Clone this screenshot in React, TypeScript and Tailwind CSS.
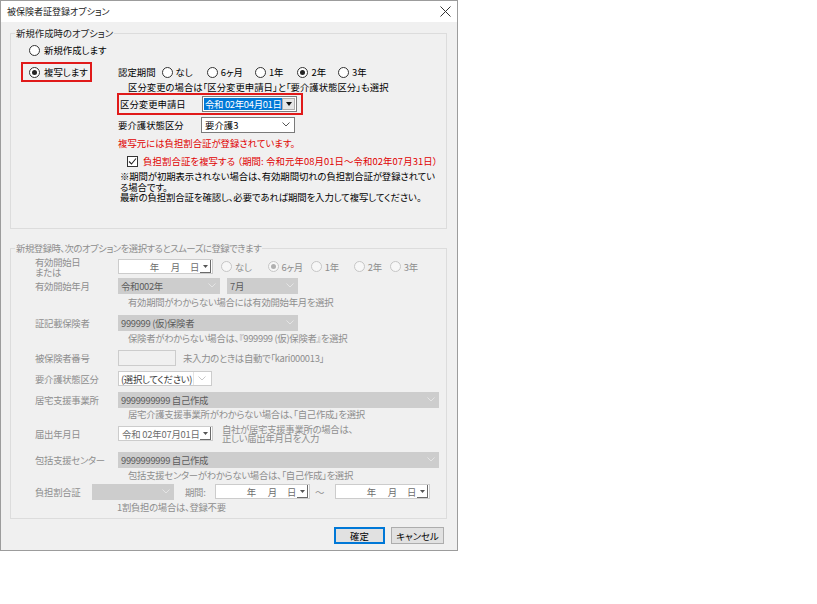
import React from "react";

const Radio = ({ on, dis }: { on?: boolean; dis?: boolean }) => (
  <span
    className={
      dis
        ? "flex h-[11px] w-[11px] shrink-0 items-center justify-center rounded-full border border-[#c6c6c6] bg-[#f7f7f7]"
        : "flex h-[11px] w-[11px] shrink-0 items-center justify-center rounded-full border border-[#333333] bg-white"
    }
  >
    {on && (
      <span
        className={
          dis
            ? "h-[5px] w-[5px] rounded-full bg-[#b0b0b0]"
            : "h-[5px] w-[5px] rounded-full bg-[#222222]"
        }
      />
    )}
  </span>
);

const Opt = ({
  label,
  on,
  dis,
  cls,
}: {
  label: string;
  on?: boolean;
  dis?: boolean;
  cls?: string;
}) => (
  <span className={"flex items-center gap-[3px] " + (cls ?? "")}>
    <Radio on={on} dis={dis} />
    <span>{label}</span>
  </span>
);

const Chev = ({ color }: { color: string }) => (
  <svg width="8" height="5" viewBox="0 0 8 5" className="shrink-0">
    <path d="M0.5 0.5 L4 4 L7.5 0.5" fill="none" stroke={color} strokeWidth="1" />
  </svg>
);

const DisDropBtn = () => (
  <span className="flex h-[13px] w-[11px] shrink-0 items-center justify-center border-r border-b border-[#6a6a6a]">
    <svg width="5" height="3" viewBox="0 0 5 3">
      <path d="M0 0 L5 0 L2.5 3 Z" fill="#555555" />
    </svg>
  </span>
);

const DisDate = ({ value, w }: { value?: string; w: string }) => (
  <div
    className={
      "flex h-[15px] shrink-0 items-center border border-[#cccccc] bg-white pl-[3px] pr-[1px] text-[#6d6d6d] " + w
    }
  >
    {value ? (
      <span className="flex-1 tracking-[-0.2px]">{value}</span>
    ) : (
      <span className="flex flex-1 justify-end pr-[1px]">
        <span>年</span>
        <span className="ml-[12px]">月</span>
        <span className="ml-[10px]">日</span>
      </span>
    )}
    <DisDropBtn />
  </div>
);

const DisSelect = ({ text, w }: { text: string; w: string }) => (
  <div
    className={
      "flex h-[16px] shrink-0 items-center justify-between bg-[#cdcdcd] pl-[3px] pr-[4px] text-[#5c5c5c] " + w
    }
  >
    <span>{text}</span>
    <Chev color="#e4e4e4" />
  </div>
);

const L2 = "w-[83px] shrink-0";

export default function App() {
  return (
    <div className="h-[604px] w-[817px] whitespace-nowrap bg-white font-['Noto_Sans_CJK_JP',sans-serif] text-[9.4px] leading-[12px] text-black [font-feature-settings:'palt']">
      <div className="flex h-[551px] w-[458px] flex-col border border-[#9c9c9c] bg-[#f0f0f0]">
        {/* title bar */}
        <div className="flex h-[21px] shrink-0 items-center justify-between bg-white pl-[6px] pr-[6px]">
          <span className="text-[9px] text-[#222]">被保険者証登録オプション</span>
          <svg width="11" height="11" viewBox="0 0 11 11">
            <path d="M0.5 0.5 L10.5 10.5 M10.5 0.5 L0.5 10.5" stroke="#333" strokeWidth="1" />
          </svg>
        </div>

        <div className="flex flex-1 flex-col pl-[9px] pt-[5px]">
          {/* group 1 */}
          <fieldset className="h-[202px] w-[437px] shrink-0 border border-[#dcdcdc]">
            <legend className="ml-[4px] px-[1px] leading-[12px] text-[#222]">新規作成時のオプション</legend>
            <div className="mt-[4px] flex h-[14px] items-center pl-[18px]">
              <Opt label="新規作成します" cls="gap-[4px]" />
            </div>
            <div className="mt-[5px] flex">
              <div className="ml-[10px] flex h-[20px] w-[71px] shrink-0 items-center border-2 border-[#e01a1a] pl-[6px]">
                <Opt label="複写します" on cls="gap-[4px]" />
              </div>
              <div className="ml-[26px] flex flex-col">
                <div className="flex h-[20px] items-center">
                  <span className="mr-[6px]">認定期間</span>
                  <Opt label="なし" cls="mr-[14px]" />
                  <Opt label="6ヶ月" cls="mr-[12px]" />
                  <Opt label="1年" cls="mr-[14px]" />
                  <Opt label="2年" on cls="mr-[12px]" />
                  <Opt label="3年" />
                </div>
                <div className="h-[11px] pl-[10px] leading-[11px]">
                  区分変更の場合は「区分変更申請日」と「要介護状態区分」も選択
                </div>
                <div className="ml-[-1px] flex h-[22px] w-[186px] items-center border-2 border-[#e01a1a] pl-[1px]">
                  <span className="w-[82px] shrink-0">区分変更申請日</span>
                  <div className="flex h-[16px] w-[95px] items-center border border-[#7a7a7a] bg-white pl-[1px] pr-[1px]">
                    <span className="flex-1 overflow-hidden">
                      <span className="bg-[#0078d7] px-[1px] tracking-[-0.3px] text-white">令和 02年04月01日</span>
                    </span>
                    <span className="flex h-[12px] w-[13px] shrink-0 items-center justify-center border border-[#adadad] bg-[#e5e5e5]">
                      <svg width="6" height="4" viewBox="0 0 6 4">
                        <path d="M0 0 L6 0 L3 4 Z" fill="#111" />
                      </svg>
                    </span>
                  </div>
                </div>
                <div className="mt-[1px] flex h-[17px] items-center">
                  <span className="w-[83px] shrink-0">要介護状態区分</span>
                  <div className="flex h-[16px] w-[94px] items-center justify-between border border-[#7a7a7a] bg-white pl-[3px] pr-[4px]">
                    <span>要介護3</span>
                    <Chev color="#555555" />
                  </div>
                </div>
                <div className="mt-[4px] h-[12px] text-[#e00000]">複写元には負担割合証が登録されています。</div>
                <div className="mt-[6px] flex h-[12px] items-center pl-[9px]">
                  <span className="flex h-[11px] w-[11px] shrink-0 items-center justify-center border border-[#333] bg-white">
                    <svg width="9" height="9" viewBox="0 0 9 9">
                      <path d="M1 4.5 L3.5 7 L8 1.5" fill="none" stroke="#222" strokeWidth="1.1" />
                    </svg>
                  </span>
                  <span className="ml-[5px] tracking-[0.1px] text-[#e00000]">
                    負担割合証を複写する （期間: 令和元年08月01日～令和02年07月31日）
                  </span>
                </div>
                <div className="mt-[4px] pl-[2px] leading-[10.5px] tracking-[-0.1px]">
                  ※期間が初期表示されない場合は、有効期間切れの負担割合証が登録されてい
                  <br />
                  る場合です。
                  <br />
                  最新の負担割合証を確認し、必要であれば期間を入力して複写してください。
                </div>
              </div>
            </div>
          </fieldset>

          {/* group 2 */}
          <fieldset className="mt-[13px] h-[277px] w-[437px] shrink-0 border border-[#dcdcdc] tracking-[-0.3px] text-[#8e8e8e]">
            <legend className="ml-[4px] px-[1px] leading-[12px] tracking-[-0.5px]">
              新規登録時、次のオプションを選択するとスムーズに登録できます
            </legend>
            <div className="pl-[24px]">
              {/* A */}
              <div className="mt-[3px] flex h-[20px]">
                <div className={L2 + " leading-[10px]"}>
                  有効開始日
                  <br />
                  または
                </div>
                <div className="mt-[2px] flex h-[15px] items-center">
                  <DisDate w="w-[95px]" />
                  <Opt label="なし" dis cls="ml-[8px] mr-[16px]" />
                  <Opt label="6ヶ月" dis on cls="mr-[8px]" />
                  <Opt label="1年" dis cls="mr-[15px]" />
                  <Opt label="2年" dis cls="mr-[8px]" />
                  <Opt label="3年" dis />
                </div>
              </div>
              {/* B */}
              <div className="flex h-[17px] items-center">
                <span className={L2}>有効開始年月</span>
                <DisSelect text="令和002年" w="w-[102px]" />
                <DisSelect text="7月" w="ml-[7px] w-[71px]" />
              </div>
              <div className="mt-[2px] h-[12px] pl-[93px]">有効期間がわからない場合には有効開始年月を選択</div>
              {/* C */}
              <div className="mt-[6px] flex h-[17px] items-center">
                <span className={L2}>証記載保険者</span>
                <DisSelect text="999999 (仮)保険者" w="w-[180px]" />
              </div>
              <div className="mt-[1px] h-[12px] pl-[93px]">保険者がわからない場合は、『999999 (仮)保険者』を選択</div>
              {/* D */}
              <div className="mt-[5px] flex h-[17px] items-center">
                <span className={L2}>被保険者番号</span>
                <div className="h-[16px] w-[58px] shrink-0 border border-[#cccccc] bg-[#f0f0f0]" />
                <span className="ml-[7px]">未入力のときは自動で「kari000013」</span>
              </div>
              {/* E */}
              <div className="mt-[4px] flex h-[17px] items-center">
                <span className={L2}>要介護状態区分</span>
                <div className="flex h-[15px] w-[94px] items-center justify-between border border-[#cccccc] bg-white pl-[2px] pr-[5px] text-[#3c3c3c]">
                  <span className="tracking-[-0.3px]">(選択してください)</span>
                  <span className="flex h-full items-center border-l border-[#e4e4e4] pl-[4px]">
                    <Chev color="#c8c8c8" />
                  </span>
                </div>
              </div>
              {/* F */}
              <div className="mt-[4px] flex h-[17px] items-center">
                <span className={L2}>居宅支援事業所</span>
                <DisSelect text="9999999999 自己作成" w="w-[321px]" />
              </div>
              <div className="h-[12px] pl-[93px]">居宅介護支援事業所がわからない場合は、「自己作成」を選択</div>
              {/* G */}
              <div className="mt-[5px] flex h-[17px] items-center">
                <span className={L2}>届出年月日</span>
                <DisDate value="令和 02年07月01日" w="w-[95px]" />
                <span className="ml-[9px] leading-[9px]">
                  自社が居宅支援事業所の場合は、
                  <br />
                  正しい届出年月日を入力
                </span>
              </div>
              {/* H */}
              <div className="mt-[9px] flex h-[17px] items-center">
                <span className={L2}>包括支援センター</span>
                <DisSelect text="9999999999 自己作成" w="w-[321px]" />
              </div>
              <div className="mt-[1px] h-[12px] pl-[93px]">包括支援センターがわからない場合は、「自己作成」を選択</div>
              {/* I */}
              <div className="mt-[2px] flex h-[17px] items-center">
                <span className="w-[57px] shrink-0">負担割合証</span>
                <DisSelect text="" w="w-[82px]" />
                <span className="ml-[11px] w-[30px] shrink-0">期間:</span>
                <DisDate w="w-[95px]" />
                <span className="ml-[5px] w-[20px] shrink-0">～</span>
                <DisDate w="w-[95px]" />
              </div>
              <div className="mt-[1px] h-[12px] pl-[82px]">1割負担の場合は、登録不要</div>
            </div>
          </fieldset>

          {/* buttons */}
          <div className="mt-[8px] flex w-[437px] justify-end gap-[6px] pr-[3px]">
            <button className="flex h-[17px] w-[51px] items-center justify-center border-2 border-[#0078d7] bg-[#e1e1e1] text-[9.4px] leading-[12px]">
              確定
            </button>
            <button className="flex h-[17px] w-[53px] items-center justify-center border border-[#adadad] bg-[#e1e1e1] text-[9.4px] leading-[12px]">
              キャンセル
            </button>
          </div>
        </div>
      </div>
    </div>
  );
}
